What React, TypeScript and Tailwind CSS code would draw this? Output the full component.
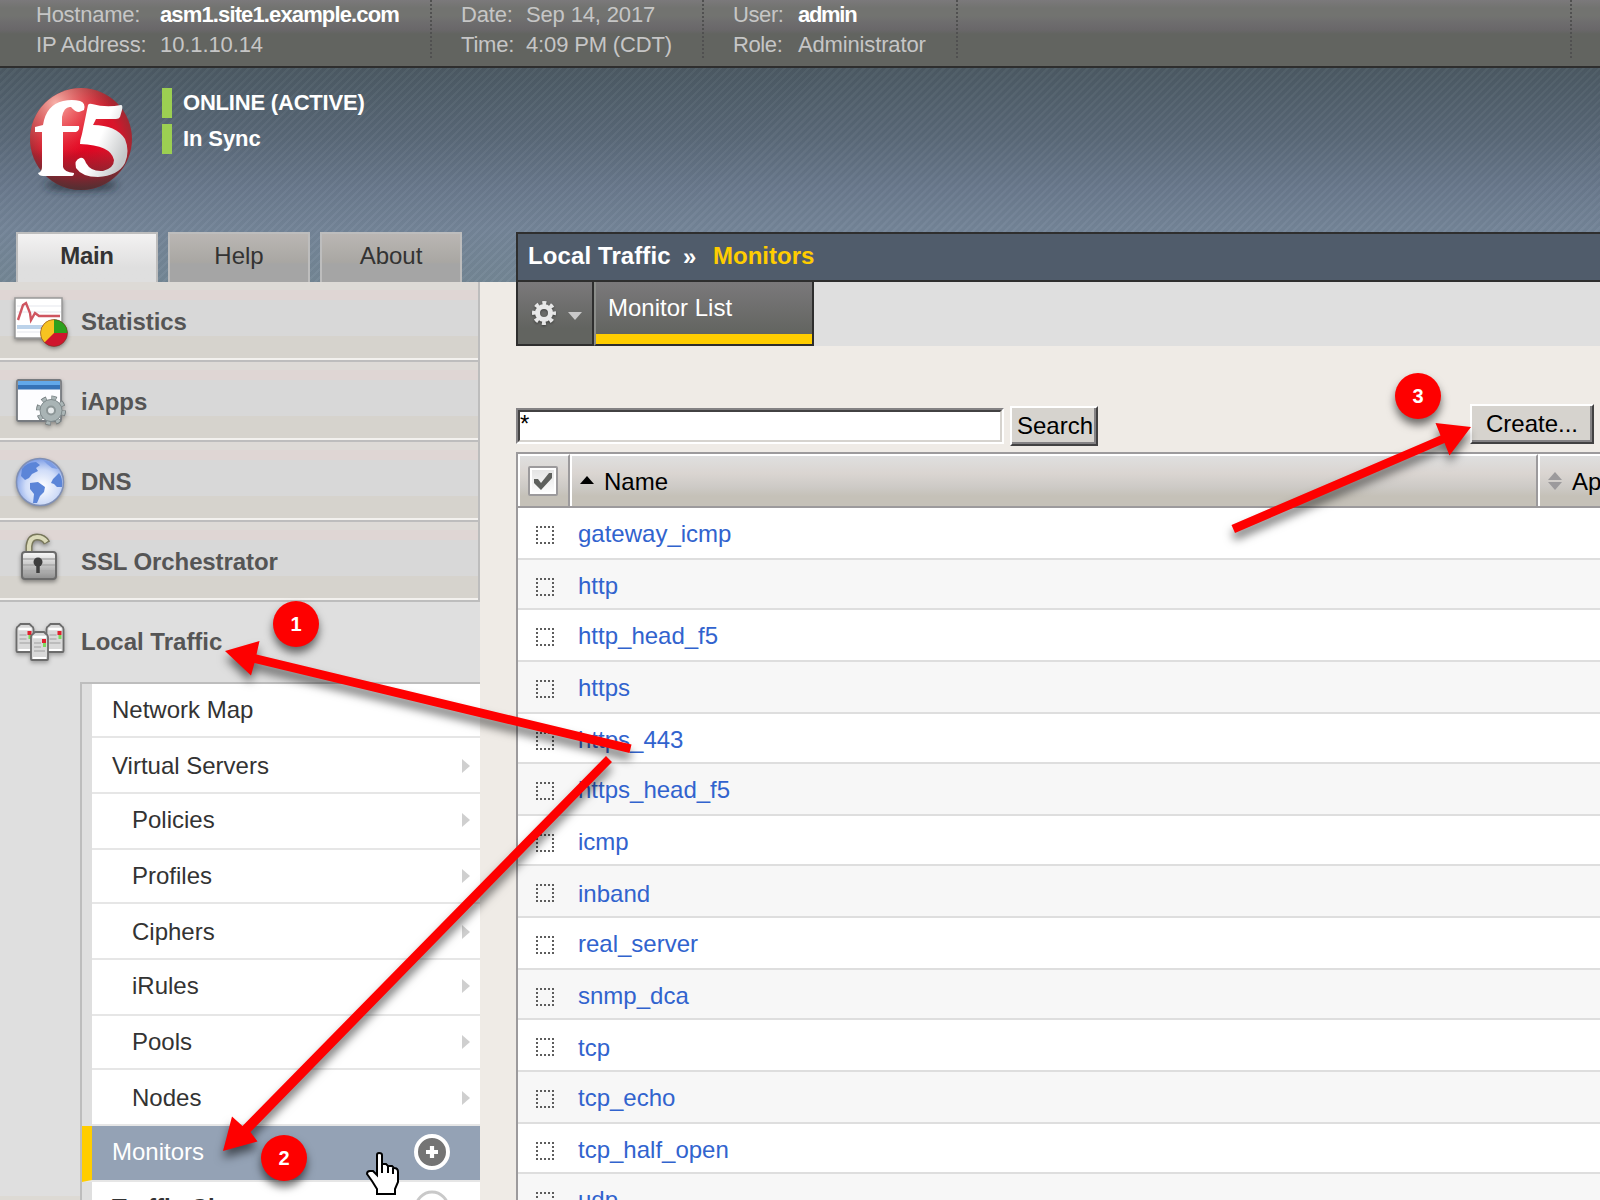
import React from "react";

const sections = [
  { label: "Statistics", icon: <StatsIcon />, iconCls: "pt-[9px] -ml-[2px] mr-[2px]" },
  { label: "iApps", icon: <AppsIcon />, iconCls: "pt-[10px] -ml-[1px] mr-[1px]" },
  { label: "DNS", icon: <GlobeIcon />, iconCls: "pt-[10px] -ml-[1px] mr-[1px]" },
  { label: "SSL Orchestrator", icon: <LockIcon />, iconCls: "pt-[6px]" },
];

const subItems = [
  { label: "Network Map", cls: "h-[54px] pl-5 pt-[10px]", arrow: false },
  { label: "Virtual Servers", cls: "h-[56px] pl-5 pt-3", arrow: true },
  { label: "Policies", cls: "h-[56px] pl-10 pt-[10px]", arrow: true },
  { label: "Profiles", cls: "h-[54px] pl-10 pt-[10px]", arrow: true },
  { label: "Ciphers", cls: "h-[56px] pl-10 pt-3", arrow: true },
  { label: "iRules", cls: "h-[56px] pl-10 pt-[10px]", arrow: true },
  { label: "Pools", cls: "h-[54px] pl-10 pt-[10px]", arrow: true },
  { label: "Nodes", cls: "h-[56px] pl-10 pt-3", arrow: true },
];

const monitors = [
  { name: "gateway_icmp", h: "h-[52px]", pt: "pt-[10px]" },
  { name: "http", h: "h-[50px]", pt: "pt-[10px]" },
  { name: "http_head_f5", h: "h-[52px]", pt: "pt-[10px]" },
  { name: "https", h: "h-[52px]", pt: "pt-[10px]" },
  { name: "https_443", h: "h-[50px]", pt: "pt-[10px]" },
  { name: "https_head_f5", h: "h-[52px]", pt: "pt-[10px]" },
  { name: "icmp", h: "h-[50px]", pt: "pt-[10px]" },
  { name: "inband", h: "h-[52px]", pt: "pt-3" },
  { name: "real_server", h: "h-[52px]", pt: "pt-[10px]" },
  { name: "snmp_dca", h: "h-[50px]", pt: "pt-[10px]" },
  { name: "tcp", h: "h-[52px]", pt: "pt-3" },
  { name: "tcp_echo", h: "h-[52px]", pt: "pt-[10px]" },
  { name: "tcp_half_open", h: "h-[50px]", pt: "pt-[10px]" },
  { name: "udp", h: "h-[52px]", pt: "pt-[10px]" },
];

function StatsIcon() {
  return (
    <svg width="60" height="60" viewBox="0 0 60 60" className="drop-shadow-[0_2px_2px_rgba(0,0,0,0.4)]">
      <rect x="3" y="7" width="47" height="40" fill="#fff" stroke="#999" strokeWidth="1.5" />
      <path d="M5 15H49M5 21H49M5 41H49" stroke="#eef0f4" strokeWidth="1.5" />
      <path d="M5 36H42" stroke="#bcd3ea" strokeWidth="4" />
      <path d="M6 29L11 14L14 12L18 22L19 29L23 22L27 25H48" fill="none" stroke="#cf5560" strokeWidth="2.4" />
      <circle cx="42" cy="42" r="13.5" fill="#cf152d" />
      <path d="M42 42V28.5A13.5 13.5 0 0 1 55.5 42Z" fill="#2da01d" />
      <path d="M42 42V28.5A13.5 13.5 0 0 0 32.5 51.5Z" fill="#f7c321" />
      <circle cx="42" cy="42" r="13.5" fill="none" stroke="#5d3a18" strokeOpacity=".45" />
    </svg>
  );
}

function AppsIcon() {
  return (
    <svg width="60" height="60" viewBox="0 0 60 60" className="drop-shadow-[0_2px_2px_rgba(0,0,0,0.35)]">
      <rect x="4" y="8" width="44" height="41" rx="1.5" fill="#fdfdff" stroke="#777b80" strokeWidth="1.8" />
      <rect x="5" y="9" width="42" height="5" fill="#62a8ea" />
      <rect x="5" y="13" width="42" height="4.5" fill="#3673b8" />
      <circle cx="38" cy="38.5" r="12.5" fill="none" stroke="#6f787a" strokeWidth="5" strokeDasharray="5 4.82" />
      <circle cx="38" cy="38.5" r="12.5" fill="none" stroke="#aab5b6" strokeWidth="3.4" strokeDasharray="4 5.82" strokeDashoffset="-0.5" />
      <circle cx="38" cy="38.5" r="11" fill="#a9b4b5" stroke="#7f8a8c" />
      <circle cx="38" cy="38.5" r="4" fill="#e5e9ea" stroke="#8b9596" strokeWidth="2" />
    </svg>
  );
}

function GlobeIcon() {
  return (
    <svg width="60" height="60" viewBox="0 0 60 60" className="drop-shadow-[0_2px_2px_rgba(0,0,0,0.35)]">
      <defs>
        <radialGradient id="globe" cx="55%" cy="60%" r="60%">
          <stop offset="0" stopColor="#fff" />
          <stop offset=".6" stopColor="#cfdcf8" />
          <stop offset="1" stopColor="#7d9de6" />
        </radialGradient>
      </defs>
      <circle cx="27" cy="30" r="23.5" fill="url(#globe)" stroke="#7f8fb5" strokeWidth="1.5" />
      <path d="M9 17Q14 10 23 10L27 13L23 16L25 19L19 22L16 26L12 28L8 24Z" fill="#5b85d8" />
      <path d="M30 8L38 10L45 17L39 16L34 12Z" fill="#7d9de4" />
      <path d="M40 27L46 21Q50 26 49 35L44 35L41 32L38 31Z" fill="#5b85d8" />
      <path d="M17 31L25 30L32 35L31 40L27 44L24 51L20 51L21 42L17 37Z" fill="#5b85d8" />
    </svg>
  );
}

function LockIcon() {
  return (
    <svg width="60" height="60" viewBox="0 0 60 60" className="drop-shadow-[0_2px_2px_rgba(0,0,0,0.4)]">
      <defs>
        <linearGradient id="lock" x2="0" y2="1">
          <stop offset="0" stopColor="#fafafa" />
          <stop offset="1" stopColor="#8f8f8f" />
        </linearGradient>
      </defs>
      <path d="M15 27V18Q16 9 23 9Q30 9 33 15" fill="none" stroke="#77765a" strokeWidth="7" />
      <path d="M15 27V18Q16 9 23 9Q29 9 32.5 14" fill="none" stroke="#dbdab9" strokeWidth="4.2" />
      <rect x="8" y="24" width="34" height="27" rx="3" fill="url(#lock)" stroke="#6b6b6b" strokeWidth="2" />
      <path d="M9 31H41M9 37H41M9 43H41" stroke="#a9a9a9" strokeWidth="1.5" />
      <circle cx="24" cy="34" r="4.5" fill="#3f3f3f" />
      <path d="M24 34V45" stroke="#3f3f3f" strokeWidth="3.5" />
    </svg>
  );
}

function ServerBox({ x, y }: { x: number; y: number }) {
  return (
    <g transform={`translate(${x} ${y})`}>
      <path d="M1 6Q1 4 3 3L5 1H14L16 3Q18 4 18 6V28Q18 29 17 29H2Q1 29 1 28Z" fill="#d9d9d9" stroke="#6c6c6c" strokeWidth="1.8" />
      <path d="M3 6H16" stroke="#fff" strokeWidth="2.5" />
      <path d="M4 12H11M4 16H11M4 20H15" stroke="#b2b2b2" strokeWidth="1.5" />
      <path d="M3 27H16" stroke="#fff" strokeWidth="2" />
      <rect x="12" y="8" width="4" height="4" fill="#e0202e" />
      <rect x="13" y="12" width="3" height="4" fill="#7cd95f" />
    </g>
  );
}

function ServersIcon() {
  return (
    <svg width="60" height="60" viewBox="0 0 60 60" className="drop-shadow-[0_2px_2px_rgba(0,0,0,0.3)]">
      <ServerBox x={1.5} y={17} />
      <ServerBox x={31.5} y={17} />
      <ServerBox x={16} y={25} />
    </svg>
  );
}

function Logo() {
  return (
    <svg width="120" height="120" viewBox="0 0 120 120">
      <defs>
        <radialGradient id="ball" cx="50%" cy="52%" r="56%">
          <stop offset="0" stopColor="#e4001f" />
          <stop offset=".65" stopColor="#d9152b" />
          <stop offset="1" stopColor="#8c2f34" />
        </radialGradient>
        <radialGradient id="shine" cx="25%" cy="15%" r="55%">
          <stop offset="0" stopColor="#fbb9b0" stopOpacity=".95" />
          <stop offset="1" stopColor="#f06058" stopOpacity="0" />
        </radialGradient>
        <linearGradient id="shade" x2="0" y2="1">
          <stop offset=".6" stopColor="#333" stopOpacity="0" />
          <stop offset="1" stopColor="#333" stopOpacity=".75" />
        </linearGradient>
        <linearGradient id="five" x2="1" y2=".6">
          <stop offset=".55" stopColor="#fff" />
          <stop offset="1" stopColor="#c5c7c9" />
        </linearGradient>
        <filter id="soft" x="-30%" y="-80%" width="160%" height="260%">
          <feGaussianBlur stdDeviation="4" />
        </filter>
      </defs>
      <ellipse cx="61" cy="104" rx="36" ry="5" fill="#1d2830" opacity=".85" filter="url(#soft)" />
      <circle cx="61" cy="58" r="51" fill="url(#ball)" />
      <circle cx="61" cy="58" r="51" fill="url(#shine)" />
      <circle cx="61" cy="58" r="51" fill="url(#shade)" />
      <path
        d="M64 29Q66 22 60 20Q52 18 43 20Q26 24 23 44L15 46V51H22V86Q22 91 18 92Q19 95 23 95H52Q54 95 54 92Q44 91 43 86V51H56Q60 49 59 45H42V36Q44 25 51 26Q55 31 59 31Z"
        fill="#fff"
      />
      <path
        d="M68 24Q69 22 72 23Q86 27 101 24Q103 24 102 29L100 36Q99 38 96 38H76L73 44Q96 44 105 58Q110 70 105 82Q98 95 78 96Q62 96 56 87Q54 79 60 77Q64 76 66 82Q71 91 83 90Q94 87 94 79Q91 64 60 63Q60 59 62 53Z"
        fill="url(#five)"
      />
    </svg>
  );
}

function Gear() {
  return (
    <svg width="28" height="28" viewBox="0 0 28 28" className="drop-shadow-[0_1px_1px_rgba(0,0,0,0.4)]">
      <circle cx="14" cy="14" r="9.5" fill="none" stroke="#e6e6e6" strokeWidth="5" strokeDasharray="3.73 3.73" strokeDashoffset="1.86" />
      <circle cx="14" cy="14" r="6.5" fill="none" stroke="#e8e8e8" strokeWidth="5" />
    </svg>
  );
}

function PlusBadge({ faded }: { faded?: boolean }) {
  return (
    <svg width="38" height="38" viewBox="0 0 38 38" className="block">
      <circle cx="19" cy="19" r="16" fill={faded ? "#fff" : "#747474"} stroke={faded ? "#c9c9c9" : "#fff"} strokeWidth={faded ? 3 : 4} />
      {!faded && <path d="M19 13V25M13 19H25" stroke="#fff" strokeWidth="4.2" />}
    </svg>
  );
}

function TopBar() {
  return (
    <div className="flex h-[68px] border-b-2 border-[#2e2e2e] bg-[linear-gradient(#7b797b_0,#727370_8px,#727370_16px,#6e6d6e_22px,#696769_30px,#626460_34px,#626460_66px)] text-[22px] leading-[30px] text-[#c6c6c6]">
      <div className="flex w-[430px] pl-9">
        <div className="w-[124px]">
          <div className="tracking-[-0.25px]">Hostname:</div>
          <div className="tracking-[-0.15px]">IP Address:</div>
        </div>
        <div>
          <div className="font-bold tracking-[-0.87px] text-white">asm1.site1.example.com</div>
          <div className="tracking-[-0.1px]">10.1.10.14</div>
        </div>
      </div>
      <div className="flex h-[58px] w-[272px] border-l-2 border-dotted border-[#505050] pl-[29px]">
        <div className="w-[65px] tracking-[-0.2px]">
          <div>Date:</div>
          <div>Time:</div>
        </div>
        <div className="tracking-[-0.15px]">
          <div>Sep 14, 2017</div>
          <div>4:09 PM (CDT)</div>
        </div>
      </div>
      <div className="flex h-[58px] w-[254px] border-l-2 border-dotted border-[#505050] pl-[29px]">
        <div className="w-[65px] tracking-[-0.4px]">
          <div>User:</div>
          <div>Role:</div>
        </div>
        <div>
          <div className="font-bold tracking-[-1.3px] text-white">admin</div>
          <div className="tracking-[-0.15px]">Administrator</div>
        </div>
      </div>
      <div className="h-[58px] w-[614px] border-l-2 border-dotted border-[#505050]" />
      <div className="h-[58px] border-l-2 border-dotted border-[#505050]" />
    </div>
  );
}

function Tab({ label, active }: { label: string; active?: boolean }) {
  return (
    <div
      className={
        active
          ? "h-[50px] w-[142px] border-2 border-b-0 border-[#bdbdbd] bg-linear-to-b from-[#f3f2f2] to-[#dfdfdf] to-70% pt-[6px] text-center font-bold tracking-[-0.3px] text-[#333]"
          : "h-[50px] w-[142px] border-2 border-b-0 border-[#bdbdbd] bg-[linear-gradient(#bab6b3,#a9a7a3_28px,#a5a5a5_30px)] pt-[6px] text-center text-[#333]"
      }
    >
      {label}
    </div>
  );
}

function Sidebar() {
  return (
    <aside className="flex h-[918px] w-[480px] shrink-0 flex-col">
      {sections.map((s) => (
        <div
          key={s.label}
          className="flex h-[80px] shrink-0 border-r-2 border-b-2 border-[#bdbdbd] bg-[linear-gradient(#dddad6_0_8px,#dfd6d4_8px_18px,#d8d8d8_18px_54px,#d6d3cd_54px_76px,#f3f1ee_76px)] pl-[14px]"
        >
          <div className={`${s.iconCls} w-[67px]`}>{s.icon}</div>
          <div className="pt-[19px] leading-[42px] font-bold tracking-[-0.1px] text-[#555]">{s.label}</div>
        </div>
      ))}
      <div className="flex h-[80px] shrink-0 bg-[#dfdfdf] pl-[14px]">
        <div className="w-[67px] pt-1">
          <ServersIcon />
        </div>
        <div className="pt-[19px] leading-[42px] font-bold text-[#555]">Local Traffic</div>
      </div>
      <div className="flex h-[518px] overflow-hidden bg-[linear-gradient(#dfdfdf_0_514px,#dddad4_514px)] pl-20">
        <div className="h-full w-[400px] border-t-2 border-l-2 border-[#bdbdbd]">
          {subItems.map((i) => (
            <div key={i.label} className="flex border-l-[10px] border-[#dfdfdf]">
              <div className={`${i.cls} flex w-[388px] items-start justify-between border-b-2 border-[#e6e6e6] bg-white leading-[32px] text-[#333]`}>
                <span>{i.label}</span>
                {i.arrow && <span className="mt-[9px] mr-[10px] border-y-[7px] border-l-[8px] border-y-transparent border-l-[#cfcfcf]" />}
              </div>
            </div>
          ))}
          <div className="flex h-[56px] justify-between border-b-2 border-l-[10px] border-b-[#e6e6e6] border-l-[#ffcd00] bg-[#94a2b5] pr-[29px] pl-5 text-white">
            <span className="pt-[10px] leading-[32px]">Monitors</span>
            <span className="pt-[7px]">
              <PlusBadge />
            </span>
          </div>
          <div className="flex h-[56px] justify-between border-l-[10px] border-[#dfdfdf] bg-white pr-[29px] pl-5 font-bold text-[#333]">
            <span className="pt-[10px] leading-[32px]">Traffic Class</span>
            <span className="pt-[7px]">
              <PlusBadge faded />
            </span>
          </div>
        </div>
      </div>
    </aside>
  );
}

function MonitorTable() {
  return (
    <div className="mt-[6px] border-t-2 border-l-2 border-[#9c9a9c]">
      <div className="flex h-[54px] border-b-2 border-[#9c9a9c]">
        <div className="w-[52px] border-t-2 border-r-2 border-l-2 border-t-white border-r-[#9c9a9c] border-l-white bg-[linear-gradient(#dfdfdf,#dad5d1_35%,#cdcac6_62%,#c5c1b8_80%)] pt-[10px] pl-[8px]">
          <div className="flex size-[30px] items-center justify-center rounded-[2px] border-2 border-[#9c9a9c] bg-linear-to-b from-[#e2e2e2] to-white outline-2 -outline-offset-4 outline-white">
            <svg width="22" height="22" viewBox="0 0 22 22">
              <path d="M2 9L6 9L9 13L17 3H20V8L9 20L2 13Z" fill="#5f615e" />
            </svg>
          </div>
        </div>
        <div className="flex w-[968px] items-start border-t-2 border-r-2 border-l-2 border-t-white border-r-[#9c9a9c] border-l-white bg-[linear-gradient(#dfdfdf,#dad5d1_35%,#cdcac6_62%,#c5c1b8_80%)] text-black">
          <span className="mt-[20px] ml-2 border-x-[7px] border-b-[8px] border-x-transparent border-b-black" />
          <span className="ml-[10px] pt-[10px] leading-[32px]">Name</span>
        </div>
        <div className="flex w-[62px] items-start overflow-hidden border-t-2 border-l-2 border-white bg-[linear-gradient(#dfdfdf,#dad5d1_35%,#cdcac6_62%,#c5c1b8_80%)] text-black">
          <svg width="14" height="18" viewBox="0 0 14 18" className="mt-[16px] ml-2 shrink-0">
            <path d="M7 0L14 8H0ZM7 18L14 10H0Z" fill="#9c9a9c" />
          </svg>
          <span className="ml-[10px] pt-[10px] leading-[32px] whitespace-nowrap">Application</span>
        </div>
      </div>
      {monitors.map((m) => (
        <div key={m.name} className={`${m.h} flex border-b-2 border-[#dedede] bg-white odd:bg-[#f7f7f7]`}>
          <div className="w-[60px] pt-[18px] pl-[18px]">
            <svg width="18" height="18" viewBox="0 0 18 18" className="block">
              <path d="M0 1H18M0 17H18" stroke="#5c5c5c" strokeWidth="2" strokeDasharray="2 2" />
              <path d="M1 4V16M17 4V16" stroke="#5c5c5c" strokeWidth="2" strokeDasharray="2 2" />
            </svg>
          </div>
          <div className={`${m.pt} leading-[32px] text-[#3163ce]`}>{m.name}</div>
        </div>
      ))}
    </div>
  );
}

const badges = [
  { n: "1", cls: "left-[273px] top-[601px]" },
  { n: "2", cls: "left-[261px] top-[1135px]" },
  { n: "3", cls: "left-[1395px] top-[373px]" },
];

function Annotations() {
  return (
    <div className="pointer-events-none absolute inset-0">
      <svg width="1600" height="1200" viewBox="0 0 1600 1200" className="absolute inset-0 drop-shadow-[0_7px_5px_rgba(0,0,0,0.55)]">
        <g fill="#fe0000">
          <path d="M225 651L259.5 641L256.5 654.5L631.5 744.5L629.5 753L254.5 663L251 675.5Z" />
          <path d="M606 756L612 762L250.5 1132L257.5 1141.5L223 1151L232 1116.5L242.5 1126Z" />
          <path d="M1231.5 525L1440.5 435.5L1435.5 423L1471 427L1449.5 455.5L1444.5 443L1235 533Z" />
        </g>
      </svg>
      {badges.map((b) => (
        <div
          key={b.n}
          className={`${b.cls} absolute flex size-[46px] items-center justify-center rounded-full bg-[#fe0000] text-[20px] font-bold text-white shadow-[0_6px_8px_rgba(0,0,0,0.55)]`}
        >
          {b.n}
        </div>
      ))}
      <svg width="36" height="46" viewBox="0 0 36 46" className="absolute top-[1151px] left-[365px]">
        <path
          d="M12 23V4Q12 2 14 2Q17 2 17 4V13H21L23 15H27L29 17Q33 17 33 21V31L30 38V43H12V38L7 30L2 23Q2 20 5 20H8L12 24Z"
          fill="#fff"
          stroke="#000"
          strokeWidth="2"
        />
        <path d="M17 13V22M23 15V22M28 17V23" stroke="#000" strokeWidth="2" />
      </svg>
    </div>
  );
}

export default function App() {
  return (
    <div className="relative h-[1200px] w-[1600px] overflow-hidden bg-[#efebe6] font-['Liberation_Sans',Arial,sans-serif] text-[24px] leading-[32px]">
      <TopBar />
      <header className="flex h-[214px] bg-[repeating-linear-gradient(135deg,rgba(255,255,255,0.035)_0_2px,rgba(0,0,0,0.02)_2.5px_5.65px),linear-gradient(#4b5963,#596877_32%,#69788c_56%,#738497_75%,#738694_100%)]">
        <div className="flex w-[516px] shrink-0 flex-col justify-between">
          <div className="flex pl-5">
            <div className="h-[120px] w-[142px] pt-[13px]">
              <Logo />
            </div>
            <div className="flex flex-col gap-[6px] pt-5 text-[22px] leading-[30px] font-bold text-white">
              <div className="h-[30px] border-l-[10px] border-[#9ccf52] pl-[11px] tracking-[-0.2px]">ONLINE (ACTIVE)</div>
              <div className="h-[30px] border-l-[10px] border-[#9ccf52] pl-[11px] tracking-[-0.1px]">In Sync</div>
            </div>
          </div>
          <div className="flex gap-[10px] pl-4">
            <Tab label="Main" active />
            <Tab label="Help" />
            <Tab label="About" />
          </div>
        </div>
        <div className="mt-[164px] flex h-[50px] grow border-2 border-r-0 border-[#2e2e2e] bg-[#505c6b] pl-[10px] leading-[43px] font-bold text-white">
          <span className="w-[155px] tracking-[0.1px]">Local Traffic</span>
          <span className="w-[30px] pt-px">»</span>
          <span className="text-[#ffcd00]">Monitors</span>
        </div>
      </header>
      <div className="flex">
        <Sidebar />
        <main className="h-[918px] grow overflow-hidden pl-9">
          <div className="flex h-16 bg-[#dfdfdf] text-white">
            <div className="flex w-[78px] items-center border-r-2 border-b-2 border-l-2 border-[#2e2e2e] bg-linear-to-b from-[#7b797b] to-[#626460] to-75% pl-3">
              <Gear />
              <span className="mt-[6px] ml-[10px] border-x-[7px] border-t-[8px] border-x-transparent border-t-[#c9c9c9]" />
            </div>
            <div className="w-[220px] border-r-2 border-b-2 border-l-2 border-r-[#2e2e2e] border-b-[#2e2e2e] border-l-[#8b8d8a]">
              <div className="h-[62px] border-b-[10px] border-[#ffcd00] bg-linear-to-b from-[#7b797b] to-[#626460] pt-[10px] pl-3">Monitor List</div>
            </div>
          </div>
          <div className="mt-[60px] flex h-[40px] justify-between pr-[6px]">
            <div className="flex text-black">
              <div className="mt-[2px] h-[36px] w-[488px] border-2 border-t-[#848284] border-r-white border-b-white border-l-[#848284]">
                <div className="h-full border-2 border-t-[#424142] border-r-[#d6d3ce] border-b-[#d6d3ce] border-l-[#424142] bg-white leading-[23px]">*</div>
              </div>
              <div className="ml-[6px] h-[40px] w-[88px] border-2 border-t-white border-r-[#424142] border-b-[#424142] border-l-white">
                <div className="h-full border-r-2 border-b-2 border-[#848284] bg-[#d6d3ce] pl-[5px] leading-[35px]">Search</div>
              </div>
            </div>
            <div className="-mt-[2px] h-[40px] w-[124px] border-2 border-t-white border-r-[#424142] border-b-[#424142] border-l-white text-black">
              <div className="h-full border-r-2 border-b-2 border-[#848284] bg-[#d6d3ce] pl-[14px] leading-[35px]">Create...</div>
            </div>
          </div>
          <MonitorTable />
        </main>
      </div>
      <Annotations />
    </div>
  );
}
